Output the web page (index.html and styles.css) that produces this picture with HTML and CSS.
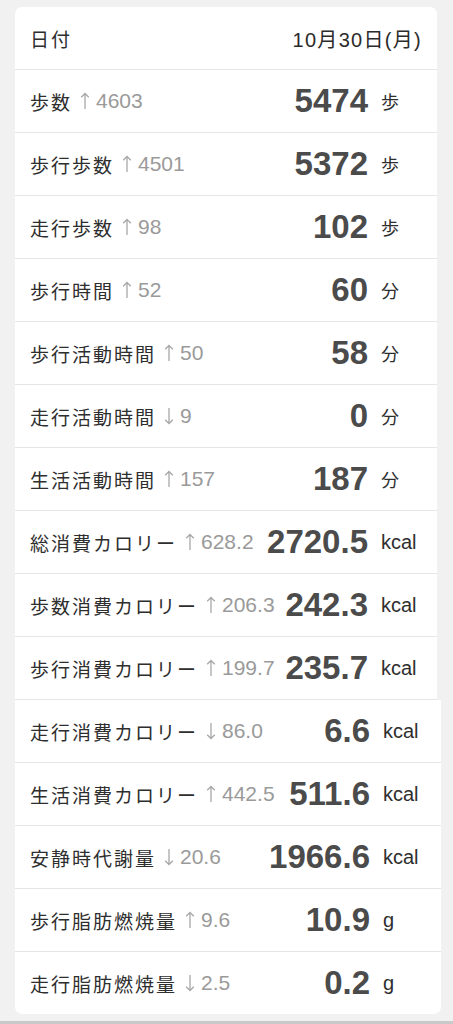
FILE: index.html
```html
<!DOCTYPE html>
<html lang="ja">
<head>
<meta charset="utf-8">
<link rel="stylesheet" href="styles.css">
</head>
<body>
<div class="card">
  <div class="section top">
    <div class="row date-row"><span class="lbl">日付</span><span class="date">10月30日(月)</span></div>
    <div class="row"><div class="label"><span class="lbl">歩数</span><span class="delta"><svg class="arr" viewBox="0 0 10 18"><path d="M5 17V1.5M1.2 5.3L5 1.5L8.8 5.3"/></svg>4603</span></div><span class="val">5474</span><span class="unit jp">歩</span></div>
    <div class="row"><div class="label"><span class="lbl">歩行歩数</span><span class="delta"><svg class="arr" viewBox="0 0 10 18"><path d="M5 17V1.5M1.2 5.3L5 1.5L8.8 5.3"/></svg>4501</span></div><span class="val">5372</span><span class="unit jp">歩</span></div>
    <div class="row"><div class="label"><span class="lbl">走行歩数</span><span class="delta"><svg class="arr" viewBox="0 0 10 18"><path d="M5 17V1.5M1.2 5.3L5 1.5L8.8 5.3"/></svg>98</span></div><span class="val">102</span><span class="unit jp">歩</span></div>
    <div class="row"><div class="label"><span class="lbl">歩行時間</span><span class="delta"><svg class="arr" viewBox="0 0 10 18"><path d="M5 17V1.5M1.2 5.3L5 1.5L8.8 5.3"/></svg>52</span></div><span class="val">60</span><span class="unit jp">分</span></div>
    <div class="row"><div class="label"><span class="lbl">歩行活動時間</span><span class="delta"><svg class="arr" viewBox="0 0 10 18"><path d="M5 17V1.5M1.2 5.3L5 1.5L8.8 5.3"/></svg>50</span></div><span class="val">58</span><span class="unit jp">分</span></div>
    <div class="row"><div class="label"><span class="lbl">走行活動時間</span><span class="delta"><svg class="arr" viewBox="0 0 10 18"><path d="M5 1V16.5M1.2 12.7L5 16.5L8.8 12.7"/></svg>9</span></div><span class="val">0</span><span class="unit jp">分</span></div>
    <div class="row"><div class="label"><span class="lbl">生活活動時間</span><span class="delta"><svg class="arr" viewBox="0 0 10 18"><path d="M5 17V1.5M1.2 5.3L5 1.5L8.8 5.3"/></svg>157</span></div><span class="val">187</span><span class="unit jp">分</span></div>
    <div class="row"><div class="label"><span class="lbl">総消費カロリー</span><span class="delta"><svg class="arr" viewBox="0 0 10 18"><path d="M5 17V1.5M1.2 5.3L5 1.5L8.8 5.3"/></svg>628.2</span></div><span class="val">2720.5</span><span class="unit">kcal</span></div>
    <div class="row"><div class="label"><span class="lbl">歩数消費カロリー</span><span class="delta"><svg class="arr" viewBox="0 0 10 18"><path d="M5 17V1.5M1.2 5.3L5 1.5L8.8 5.3"/></svg>206.3</span></div><span class="val">242.3</span><span class="unit">kcal</span></div>
    <div class="row"><div class="label"><span class="lbl">歩行消費カロリー</span><span class="delta"><svg class="arr" viewBox="0 0 10 18"><path d="M5 17V1.5M1.2 5.3L5 1.5L8.8 5.3"/></svg>199.7</span></div><span class="val">235.7</span><span class="unit">kcal</span></div>
  </div>
  <div class="section bottom">
    <div class="row"><div class="label"><span class="lbl">走行消費カロリー</span><span class="delta"><svg class="arr" viewBox="0 0 10 18"><path d="M5 1V16.5M1.2 12.7L5 16.5L8.8 12.7"/></svg>86.0</span></div><span class="val">6.6</span><span class="unit">kcal</span></div>
    <div class="row"><div class="label"><span class="lbl">生活消費カロリー</span><span class="delta"><svg class="arr" viewBox="0 0 10 18"><path d="M5 17V1.5M1.2 5.3L5 1.5L8.8 5.3"/></svg>442.5</span></div><span class="val">511.6</span><span class="unit">kcal</span></div>
    <div class="row"><div class="label"><span class="lbl">安静時代謝量</span><span class="delta"><svg class="arr" viewBox="0 0 10 18"><path d="M5 1V16.5M1.2 12.7L5 16.5L8.8 12.7"/></svg>20.6</span></div><span class="val">1966.6</span><span class="unit">kcal</span></div>
    <div class="row"><div class="label"><span class="lbl">歩行脂肪燃焼量</span><span class="delta"><svg class="arr" viewBox="0 0 10 18"><path d="M5 17V1.5M1.2 5.3L5 1.5L8.8 5.3"/></svg>9.6</span></div><span class="val">10.9</span><span class="unit">g</span></div>
    <div class="row"><div class="label"><span class="lbl">走行脂肪燃焼量</span><span class="delta"><svg class="arr" viewBox="0 0 10 18"><path d="M5 1V16.5M1.2 12.7L5 16.5L8.8 12.7"/></svg>2.5</span></div><span class="val">0.2</span><span class="unit">g</span></div>
  </div>
</div>
<div class="foot"></div>
</body>
</html>
```

FILE: styles.css
```css
html, body {
  margin: 0;
  padding: 0;
}
body {
  background: #f1f1f1;
  width: 453px;
  height: 1024px;
  overflow: hidden;
  position: relative;
  font-family: "Liberation Sans", "Noto Sans CJK JP", sans-serif;
  color: #2b2b2b;
}
.card {
  margin: 7px 0 0 15px;
  width: 422px;
}
.section {
  background: #ffffff;
}
.top {
  border-radius: 7px 7px 0 0;
}
.bottom {
  margin-right: -4px;
  border-radius: 0 0 7px 7px;
}
.row {
  display: flex;
  align-items: center;
  height: 62px;
  padding-left: 15px;
  border-bottom: 1px solid #e6e6e6;
}
.bottom .row:last-child {
  border-bottom: none;
}
.label {
  flex: 1;
  display: flex;
  align-items: center;
  min-width: 0;
  white-space: nowrap;
}
.lbl {
  font-family: "Noto Sans CJK JP", sans-serif;
  font-size: 19px;
  letter-spacing: 2px;
  color: #2e2e2e;
}
.delta {
  display: flex;
  align-items: center;
  margin-left: 8px;
  font-size: 21px;
  color: #9a9a9a;
}
.arr {
  width: 10px;
  height: 18px;
  margin-right: 6px;
  fill: none;
  stroke: #a8a8a8;
  stroke-width: 1.3;
}
.val {
  font-weight: bold;
  font-size: 33px;
  color: #4b4b4b;
  white-space: nowrap;
}
.unit {
  width: 56px;
  margin-left: 13px;
  font-size: 20px;
  color: #2e2e2e;
}
.bottom .unit {
  width: 58px;
}
.unit.jp {
  font-family: "Noto Sans CJK JP", sans-serif;
  font-size: 18px;
}
.date-row {
  justify-content: space-between;
  padding-right: 15px;
}
.date {
  font-size: 20px;
  letter-spacing: 1.3px;
  color: #2b2b2b;
}
.foot {
  position: absolute;
  left: 0;
  right: 0;
  bottom: 0;
  height: 3px;
  background: #c9c9c9;
}
```
